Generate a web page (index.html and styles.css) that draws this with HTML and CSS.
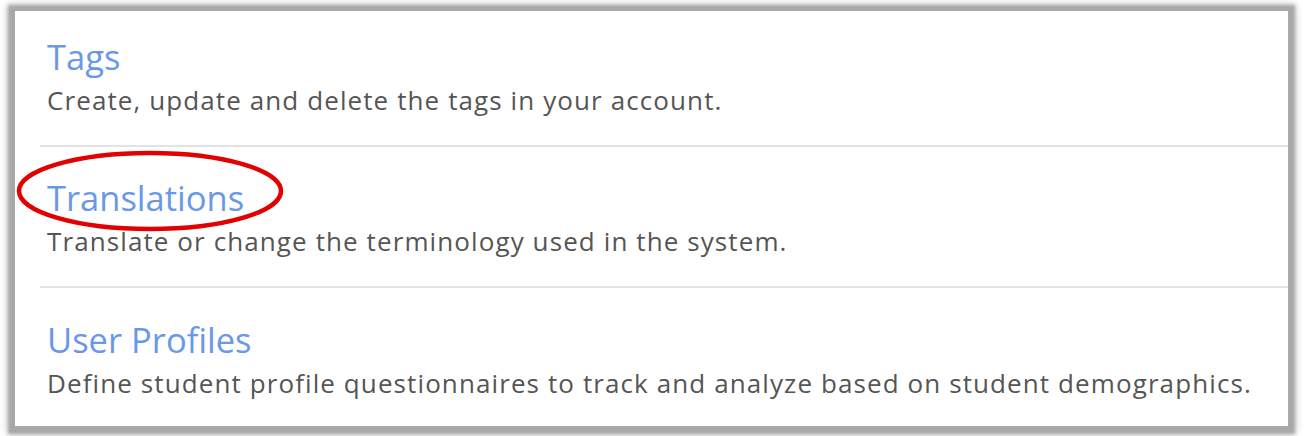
FILE: index.html
```html
<!DOCTYPE html>
<html>
<head>
<meta charset="utf-8">
<link rel="stylesheet" href="styles.css">
</head>
<body>
<div class="card">
  <div class="row first">
    <div class="title">Tags</div>
    <div class="desc">Create, update and delete the tags in your account.</div>
  </div>
  <div class="row">
    <div class="title">Translations</div>
    <div class="desc">Translate or change the terminology used in the system.</div>
  </div>
  <div class="row last">
    <div class="title">User Profiles</div>
    <div class="desc">Define student profile questionnaires to track and analyze based on student demographics.</div>
  </div>
  <svg class="circle" width="280" height="90" viewBox="0 0 280 90">
    <ellipse cx="140" cy="45" rx="131" ry="38" fill="none" stroke="#e30000" stroke-width="4.5"/>
  </svg>
</div>
</body>
</html>
```
FILE: styles.css
```css
html, body {
  margin: 0;
  padding: 0;
  background: #ffffff;
}
body {
  width: 1308px;
  height: 436px;
  overflow: hidden;
  font-family: "Open Sans", "Noto Sans", sans-serif;
}
.card {
  position: relative;
  margin: 11px 0 0 15px;
  width: 1273px;
  height: 415px;
  background: #ffffff;
  box-shadow: 0 1px 3px 7px #a8a8a8, 0 1px 8px 8px rgba(0,0,0,0.18);
}
.row {
  margin-left: 25px;
  padding: 31px 0 30px 7px;
  border-bottom: 2px solid #e3e3e3;
}
.row.first {
  padding-top: 26px;
}
.row.last {
  border-bottom: none;
  padding-top: 32px;
}
.title {
  font-size: 34.5px;
  line-height: 40px;
  color: #6a98e8;
}
.desc {
  margin-top: 8px;
  font-size: 26px;
  line-height: 30px;
  letter-spacing: 1.1px;
  color: #555555;
}
.circle {
  position: absolute;
  left: -5px;
  top: 135px;
}
```
